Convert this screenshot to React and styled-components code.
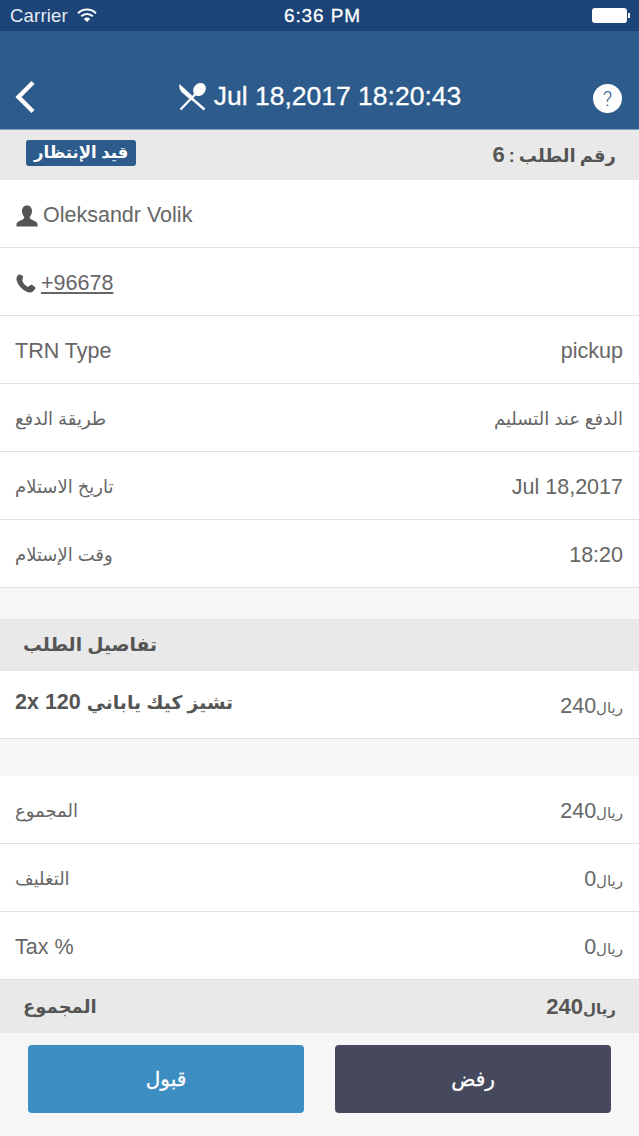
import React from 'react'
import styled, { createGlobalStyle } from 'styled-components'

const GlobalStyle = createGlobalStyle`
    html, body {
        margin: 0;
        padding: 0;
        background: #f6f6f6;
    }
    * {
        box-sizing: border-box;
    }
`;

function App() {
    return (
        <Page>
            <GlobalStyle />
            <StatusBar>
                <Carrier>
                    Carrier
                    <svg width="20" height="15" viewBox="0 0 20 15">
                        <path d="M1 5.2a12.8 12.8 0 0 1 18 0" fill="none" stroke="#fff" strokeWidth="1.9" />
                        <path d="M4.2 8.3a8.3 8.3 0 0 1 11.6 0" fill="none" stroke="#fff" strokeWidth="1.9" />
                        <path d="M6.9 10.9a4.3 4.3 0 0 1 6.2 0L10 14z" fill="#fff" />
                    </svg>
                </Carrier>
                <Clock>6:36 PM</Clock>
                <Battery><BatteryCap /></Battery>
            </StatusBar>
            <Header>
                <BackButton>
                    <svg width="22" height="36" viewBox="0 0 22 36">
                        <path d="M19 3.5 4.500 18 19 32.500" fill="none" stroke="#fff" strokeWidth="4.4" />
                    </svg>
                </BackButton>
                <HeaderTitle>
                    <svg width="30" height="30" viewBox="0 0 30 30">
                        <path d="M1.500 2 14 13.500 11 16.500 4 10.500C1.500 8 .8 5 1.500 2z" fill="#fff" />
                        <path d="M11 14 26.500 27.500" stroke="#fff" strokeWidth="2.400" fill="none" />
                        <path d="M2.500 27.500 17.500 12" stroke="#fff" strokeWidth="2.400" fill="none" />
                        <ellipse cx="21.500" cy="7.500" rx="5.800" ry="7" transform="rotate(42 21.500 7.500)" fill="#fff" />
                    </svg>
                    <span>Jul 18,2017 18:20:43</span>
                </HeaderTitle>
                <HelpButton>?</HelpButton>
            </Header>
            <SectionBar $height={50}>
                <Badge>قيد الإنتظار</Badge>
                <OrderNumber>رقم الطلب : <strong>6</strong></OrderNumber>
            </SectionBar>
            <Row>
                <ContactLabel>
                    <svg width="24" height="24" viewBox="0 0 24 24">
                        <path d="M12 1.500c3.400 0 5 2.600 5 5.600 0 2.500-1 4.600-2.300 6 0 1.300.5 2 2 2.600 2.700 1 5.300 2 5.800 4v2.800H1.500V19.700c.5-2 3.100-3 5.800-4 1.500-.6 2-1.300 2-2.600C8 11.700 7 9.600 7 7.100c0-3 1.600-5.600 5-5.600z" fill="#555" />
                    </svg>
                    Oleksandr Volik
                </ContactLabel>
            </Row>
            <Row>
                <ContactLabel>
                    <svg width="22" height="22" viewBox="0 0 22 22">
                        <path d="M4.500 1.500 7.300 2.500c.6.3.8.8.7 1.400L7.400 7c-.1.500-.1.900.2 1.400.9 2 2.400 3.700 4.600 5 .5.300.9.300 1.300 0l2.300-1.500c.5-.3 1-.3 1.500 0l2.700 2.200c.5.400.6 1 .3 1.500-1 1.800-2.600 3.700-4.700 3.900C10 20 2 12 1.500 6.500 1.300 4.500 2.300 2.800 3.400 1.800c.3-.3.700-.4 1.100-.3z" fill="#555" />
                    </svg>
                    <PhoneLink>+96678</PhoneLink>
                </ContactLabel>
            </Row>
            <Row><Label>TRN Type</Label><Value>pickup</Value></Row>
            <Row><Label $arabic>طريقة الدفع</Label><Value $arabic>الدفع عند التسليم</Value></Row>
            <Row><Label $arabic>تاريخ الاستلام</Label><Value>Jul 18,2017</Value></Row>
            <Row><Label $arabic>وقت الإستلام</Label><Value>18:20</Value></Row>
            <Gap $height={31} />
            <SectionBar $height={52}>
                <SectionText $size={18.7}>تفاصيل الطلب</SectionText>
            </SectionBar>
            <Row>
                <ItemName>
                    <span>2x 120</span>
                    <ItemArabic>تشيز كيك ياباني</ItemArabic>
                </ItemName>
                <Value><Currency>ريال</Currency>240</Value>
            </Row>
            <Gap $height={37} />
            <Row><Label $arabic>المجموع</Label><Value><Currency>ريال</Currency>240</Value></Row>
            <Row><Label $arabic>التغليف</Label><Value><Currency>ريال</Currency>0</Value></Row>
            <Row><Label>Tax %</Label><Value><Currency>ريال</Currency>0</Value></Row>
            <SectionBar $height={53}>
                <SectionText>المجموع</SectionText>
                <TotalValue><Currency>ريال</Currency>240</TotalValue>
            </SectionBar>
            <Footer>
                <ActionButton $color="#3c8dc2">قبول</ActionButton>
                <ActionButton $color="#46495d">رفض</ActionButton>
            </Footer>
        </Page>
    )
}

const FONT = `"Liberation Sans", "DejaVu Sans", sans-serif`;

const Page = styled.div`
    width: 639px;
    height: 1136px;
    overflow: hidden;
    display: flex;
    flex-direction: column;
    background-color: #f6f6f6;
    font-family: ${FONT};
`;

const StatusBar = styled.div`
    height: 31px;
    padding: 0 10px;
    display: grid;
    grid-template-columns: 1fr auto 1fr;
    align-items: center;
    background-color: #1c4478;
    color: white;
    font-size: 18.5px;
    letter-spacing: 0.2px;
`;

const Carrier = styled.div`
    display: flex;
    align-items: center;
    gap: 9px;
    color: #e6ecf3;
`;

const Clock = styled.div`
    margin-left: 6px;
    font-size: 19px;
    letter-spacing: 0.9px;
    -webkit-text-stroke: 0.3px white;
`;

const Battery = styled.div`
    justify-self: end;
    position: relative;
    width: 35px;
    height: 15px;
    margin-right: 2px;
    border-radius: 3px;
    background-color: white;
`;

const BatteryCap = styled.div`
    position: absolute;
    right: -3px;
    top: 5px;
    width: 2px;
    height: 5px;
    background-color: white;
`;

const Header = styled.div`
    height: 99px;
    padding: 33px 14px 0 14px;
    display: flex;
    align-items: center;
    justify-content: space-between;
    background-color: #2c5b8c;
    border-bottom: 1px solid #7da3c4;
`;

const BackButton = styled.div`
    display: flex;
    width: 30px;
`;

const HeaderTitle = styled.div`
    display: flex;
    align-items: center;
    gap: 6px;
    margin-left: 2px;
    color: white;
    font-size: 26.5px;
    -webkit-text-stroke: 0.3px white;
`;

const HelpButton = styled.div`
    width: 29px;
    height: 29px;
    margin: 4px 3px 0 0;
    border-radius: 50%;
    display: flex;
    align-items: center;
    justify-content: center;
    background-color: white;
    color: #2c5b8c;
    font-family: Roboto, sans-serif;
    font-size: 20px;
    font-weight: 300;
`;

const SectionBar = styled.div`
    height: ${props => props.$height}px;
    padding: 0 23px 0 23px;
    display: flex;
    align-items: center;
    justify-content: space-between;
    background-color: #e9e9e9;
`;

const SectionText = styled.div`
    color: #555;
    font-size: ${props => props.$size || 18}px;
    font-weight: bold;
`;

const OrderNumber = styled.div`
    margin-left: auto;
    color: #555;
    font-size: 18px;
    font-weight: bold;
    word-spacing: -1px;
    strong {
        font-size: 22px;
    }
`;

const TotalValue = styled.div`
    color: #555;
    font-size: 22px;
    font-weight: bold;
`;

const Currency = styled.span`
    font-size: 15px;
`;

const Badge = styled.div`
    height: 26px;
    margin: -5px 0 0 3px;
    padding: 0 8px;
    display: flex;
    align-items: center;
    border-radius: 3px;
    background-color: #2c5b8c;
    color: white;
    font-size: 16.5px;
    font-weight: bold;
`;

const Row = styled.div`
    height: 68px;
    padding: 4px 16px 0 15px;
    display: flex;
    align-items: center;
    justify-content: space-between;
    background-color: white;
    border-bottom: 1px solid #dfdfdf;
    color: #666;
    font-size: 21.5px;
`;

const Label = styled.div`
    margin-top: ${props => props.$arabic ? '-2px' : '0'};
    color: #666;
    font-size: ${props => props.$arabic ? '18px' : '21.5px'};
`;

const Value = styled.div`
    margin-top: ${props => props.$arabic ? '-2px' : '0'};
    color: #666;
    font-size: ${props => props.$arabic ? '18px' : '21.5px'};
`;

const ContactLabel = styled.div`
    display: flex;
    align-items: center;
    gap: 4px;
    color: #666;
`;

const PhoneLink = styled.span`
    text-decoration: underline;
`;

const ItemName = styled.div`
    margin-top: -8px;
    display: flex;
    align-items: center;
    gap: 6px;
    color: #555;
    font-size: 21.5px;
    font-weight: bold;
`;

const ItemArabic = styled.span`
    font-size: 18.8px;
`;

const Gap = styled.div`
    height: ${props => props.$height}px;
`;

const Footer = styled.div`
    flex: 1;
    padding: 12px 28px 0;
    display: flex;
    justify-content: space-between;
    align-items: flex-start;
`;

const ActionButton = styled.button`
    width: 276px;
    height: 68px;
    border: 0;
    border-radius: 4px;
    background-color: ${props => props.$color};
    color: white;
    font-family: ${FONT};
    font-size: 20px;
    -webkit-text-stroke: 0.3px white;
`;

export default App
